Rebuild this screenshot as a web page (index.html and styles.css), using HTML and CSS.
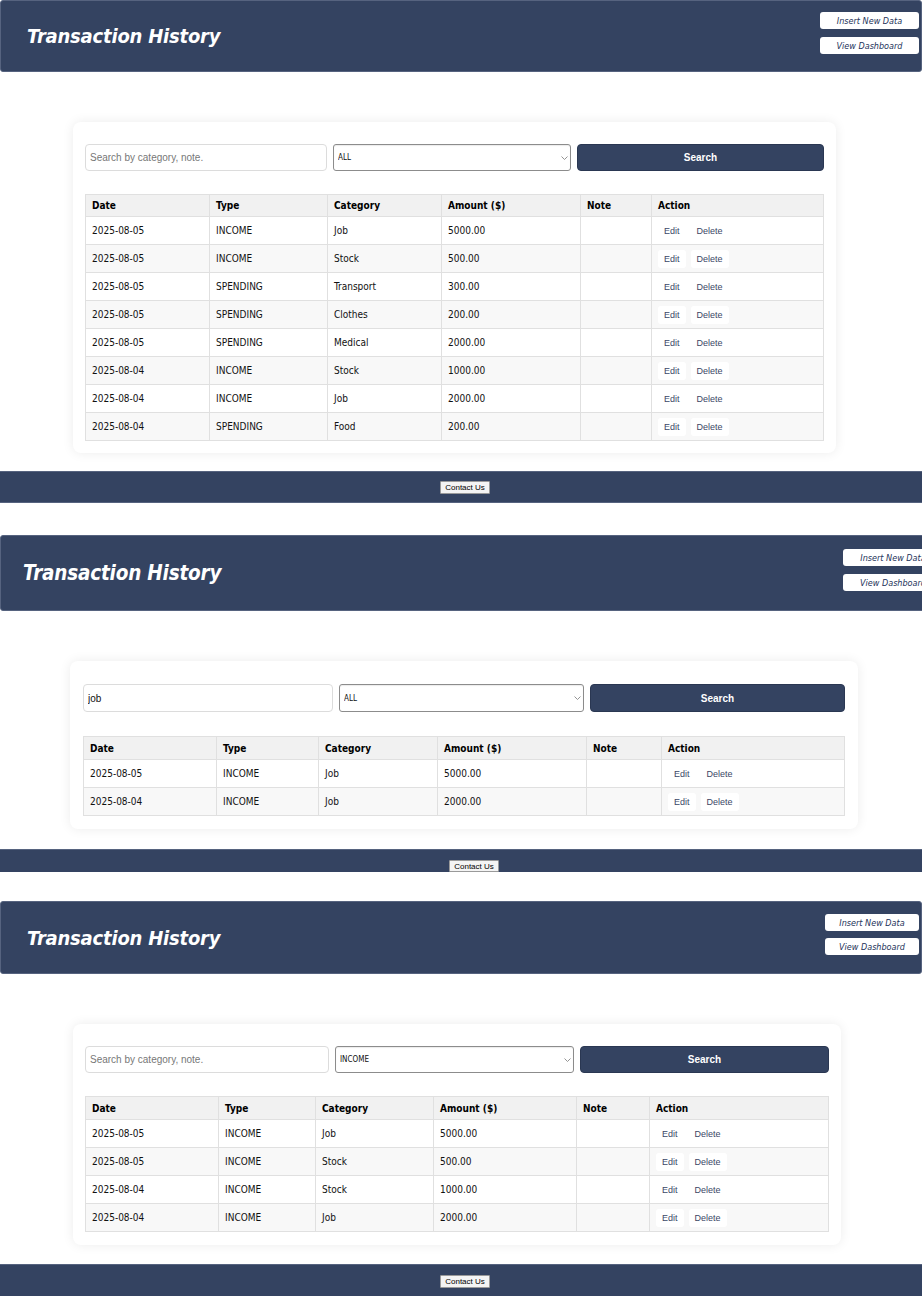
FILE: index.html
```html
<!DOCTYPE html>
<html lang="en">
<head>
    <meta charset="UTF-8">
    <meta name="viewport" content="width=device-width, initial-scale=1.0">
    <title>Transaction History</title>
    <link rel="stylesheet" href="styles.css">
</head>
<body>
    <!-- State 1: all transactions -->
    <section class="shot shot-1">
        <header class="topbar">
            <h1>Transaction History</h1>
            <div class="topbar-links">
                <button type="button">Insert New Data</button>
                <button type="button">View Dashboard</button>
            </div>
        </header>
        <main class="card">
            <form class="search-row">
                <input type="text" placeholder="Search by category, note.">
                <div class="select-wrap">
                    <select><option>ALL</option><option>INCOME</option><option>SPENDING</option></select>
                    <svg class="chevron" width="7" height="4" viewBox="0 0 7 4"><polyline points="0.5,0.5 3.5,3.5 6.5,0.5" fill="none" stroke="#888" stroke-width="0.9"/></svg>
                </div>
                <button type="button" class="search-btn">Search</button>
            </form>
            <table class="tx-table">
                <colgroup>
                    <col class="col-date"><col class="col-type"><col class="col-cat"><col class="col-amount"><col class="col-note"><col>
                </colgroup>
                <thead>
                    <tr><th>Date</th><th>Type</th><th>Category</th><th>Amount ($)</th><th>Note</th><th>Action</th></tr>
                </thead>
                <tbody>
                    <tr><td>2025-08-05</td><td>INCOME</td><td>Job</td><td>5000.00</td><td></td><td><button class="row-btn">Edit</button><button class="row-btn">Delete</button></td></tr>
                    <tr><td>2025-08-05</td><td>INCOME</td><td>Stock</td><td>500.00</td><td></td><td><button class="row-btn">Edit</button><button class="row-btn">Delete</button></td></tr>
                    <tr><td>2025-08-05</td><td>SPENDING</td><td>Transport</td><td>300.00</td><td></td><td><button class="row-btn">Edit</button><button class="row-btn">Delete</button></td></tr>
                    <tr><td>2025-08-05</td><td>SPENDING</td><td>Clothes</td><td>200.00</td><td></td><td><button class="row-btn">Edit</button><button class="row-btn">Delete</button></td></tr>
                    <tr><td>2025-08-05</td><td>SPENDING</td><td>Medical</td><td>2000.00</td><td></td><td><button class="row-btn">Edit</button><button class="row-btn">Delete</button></td></tr>
                    <tr><td>2025-08-04</td><td>INCOME</td><td>Stock</td><td>1000.00</td><td></td><td><button class="row-btn">Edit</button><button class="row-btn">Delete</button></td></tr>
                    <tr><td>2025-08-04</td><td>INCOME</td><td>Job</td><td>2000.00</td><td></td><td><button class="row-btn">Edit</button><button class="row-btn">Delete</button></td></tr>
                    <tr><td>2025-08-04</td><td>SPENDING</td><td>Food</td><td>200.00</td><td></td><td><button class="row-btn">Edit</button><button class="row-btn">Delete</button></td></tr>
                </tbody>
            </table>
        </main>
        <footer class="footbar"><button type="button">Contact Us</button></footer>
    </section>

    <!-- State 2: searched for "job" -->
    <section class="shot shot-2">
        <header class="topbar">
            <h1>Transaction History</h1>
            <div class="topbar-links">
                <button type="button">Insert New Data</button>
                <button type="button">View Dashboard</button>
            </div>
        </header>
        <main class="card">
            <form class="search-row">
                <input type="text" value="job" placeholder="Search by category, note.">
                <div class="select-wrap">
                    <select><option>ALL</option><option>INCOME</option><option>SPENDING</option></select>
                    <svg class="chevron" width="7" height="4" viewBox="0 0 7 4"><polyline points="0.5,0.5 3.5,3.5 6.5,0.5" fill="none" stroke="#888" stroke-width="0.9"/></svg>
                </div>
                <button type="button" class="search-btn">Search</button>
            </form>
            <table class="tx-table">
                <colgroup>
                    <col class="col-date"><col class="col-type"><col class="col-cat"><col class="col-amount"><col class="col-note"><col>
                </colgroup>
                <thead>
                    <tr><th>Date</th><th>Type</th><th>Category</th><th>Amount ($)</th><th>Note</th><th>Action</th></tr>
                </thead>
                <tbody>
                    <tr><td>2025-08-05</td><td>INCOME</td><td>Job</td><td>5000.00</td><td></td><td><button class="row-btn">Edit</button><button class="row-btn">Delete</button></td></tr>
                    <tr><td>2025-08-04</td><td>INCOME</td><td>Job</td><td>2000.00</td><td></td><td><button class="row-btn">Edit</button><button class="row-btn">Delete</button></td></tr>
                </tbody>
            </table>
        </main>
        <footer class="footbar"><button type="button">Contact Us</button></footer>
    </section>

    <!-- State 3: filtered by INCOME -->
    <section class="shot shot-3">
        <header class="topbar">
            <h1>Transaction History</h1>
            <div class="topbar-links">
                <button type="button">Insert New Data</button>
                <button type="button">View Dashboard</button>
            </div>
        </header>
        <main class="card">
            <form class="search-row">
                <input type="text" placeholder="Search by category, note.">
                <div class="select-wrap">
                    <select><option>INCOME</option><option>ALL</option><option>SPENDING</option></select>
                    <svg class="chevron" width="7" height="4" viewBox="0 0 7 4"><polyline points="0.5,0.5 3.5,3.5 6.5,0.5" fill="none" stroke="#888" stroke-width="0.9"/></svg>
                </div>
                <button type="button" class="search-btn">Search</button>
            </form>
            <table class="tx-table">
                <colgroup>
                    <col class="col-date"><col class="col-type"><col class="col-cat"><col class="col-amount"><col class="col-note"><col>
                </colgroup>
                <thead>
                    <tr><th>Date</th><th>Type</th><th>Category</th><th>Amount ($)</th><th>Note</th><th>Action</th></tr>
                </thead>
                <tbody>
                    <tr><td>2025-08-05</td><td>INCOME</td><td>Job</td><td>5000.00</td><td></td><td><button class="row-btn">Edit</button><button class="row-btn">Delete</button></td></tr>
                    <tr><td>2025-08-05</td><td>INCOME</td><td>Stock</td><td>500.00</td><td></td><td><button class="row-btn">Edit</button><button class="row-btn">Delete</button></td></tr>
                    <tr><td>2025-08-04</td><td>INCOME</td><td>Stock</td><td>1000.00</td><td></td><td><button class="row-btn">Edit</button><button class="row-btn">Delete</button></td></tr>
                    <tr><td>2025-08-04</td><td>INCOME</td><td>Job</td><td>2000.00</td><td></td><td><button class="row-btn">Edit</button><button class="row-btn">Delete</button></td></tr>
                </tbody>
            </table>
        </main>
        <footer class="footbar"><button type="button">Contact Us</button></footer>
    </section>
</body>
</html>
```

FILE: styles.css
```css
body {
    margin: 0;
    padding: 0;
    background-color: #fff;
    font-family: "DejaVu Sans Condensed", "DejaVu Sans", sans-serif;
    font-stretch: condensed;
    color: #111;
    overflow-x: hidden;
}

.shot {
    overflow: hidden;
}

/* ---------- top bar ---------- */

.topbar {
    box-sizing: border-box;
    height: 72px;
    display: flex;
    justify-content: space-between;
    align-items: center;
    background-color: #344361;
    border: 1px solid #56637f;
    border-radius: 3px;
    padding: 0 2px 0 26px;
}

.topbar h1 {
    margin: 0;
    color: #fff;
    font-size: 20px;
    font-weight: bold;
    font-style: italic;
    letter-spacing: -0.2px;
}

.topbar-links {
    align-self: flex-start;
    display: flex;
    flex-direction: column;
    gap: 8px;
    padding-top: 11px;
}

.topbar-links button {
    width: 99px;
    height: 17px;
    padding: 0;
    background-color: #fff;
    border: none;
    border-radius: 3px;
    color: #24335a;
    font-family: "DejaVu Sans Condensed", "DejaVu Sans", sans-serif;
    font-stretch: condensed;
    font-style: italic;
    font-size: 9px;
}

/* ---------- card ---------- */

.card {
    display: block;
    box-sizing: border-box;
    width: 763px;
    margin: 50px 0 18px 73px;
    padding: 22px 12px 12px;
    background-color: #fff;
    border-radius: 8px;
    box-shadow: 0 0 12px rgba(0, 0, 0, 0.08);
}

.search-row {
    display: flex;
    gap: 6px;
    height: 27px;
    margin: 0 0 23px;
}

.search-row input {
    flex: none;
    width: 242px;
    box-sizing: border-box;
    height: 100%;
    padding: 0 4px;
    border: 1px solid #dcdcdc;
    border-radius: 4px;
    font-family: "Liberation Sans", Arial, sans-serif;
    font-size: 10px;
    color: #111;
}

.search-row input::placeholder {
    color: #777;
}

.select-wrap {
    flex: none;
    width: 238px;
    position: relative;
}

.select-wrap select {
    appearance: none;
    box-sizing: border-box;
    width: 100%;
    height: 100%;
    padding: 0 4px;
    background-color: #fff;
    border: 1px solid #8c8c8c;
    border-radius: 3px;
    box-shadow: inset 0 1px 1px rgba(0, 0, 0, 0.08);
    font-family: "DejaVu Sans Condensed", "DejaVu Sans", sans-serif;
    font-stretch: condensed;
    font-size: 8px;
    color: #111;
}

.chevron {
    position: absolute;
    right: 3px;
    top: 12px;
}

.search-btn {
    flex: none;
    width: 247px;
    height: 100%;
    padding: 0;
    background-color: #344361;
    border: 1px solid #2a3752;
    border-radius: 4px;
    color: #fff;
    font-family: "Liberation Sans", Arial, sans-serif;
    font-weight: bold;
    font-size: 10px;
}

/* ---------- table ---------- */

.tx-table {
    width: 100%;
    border-collapse: collapse;
    table-layout: fixed;
    font-size: 10px;
}

.tx-table th,
.tx-table td {
    border: 1px solid #e0e0e0;
    padding: 0 6px;
    text-align: left;
    white-space: nowrap;
}

.tx-table thead tr {
    height: 22px;
    background-color: #f1f1f1;
}

.tx-table th {
    font-weight: bold;
    color: #000;
}

.tx-table tbody tr {
    height: 28px;
}

.tx-table tbody tr:nth-child(even) {
    background-color: #f8f8f8;
}

.row-btn {
    height: 18px;
    margin-right: 5px;
    padding: 0 6px;
    background-color: #fff;
    border: none;
    border-radius: 3px;
    color: #3b4766;
    font-family: "Liberation Sans", Arial, sans-serif;
    font-size: 9px;
}

.shot-1 .col-date { width: 124px; }
.shot-1 .col-type { width: 118px; }
.shot-1 .col-cat { width: 114px; }
.shot-1 .col-amount { width: 139px; }
.shot-1 .col-note { width: 71px; }

/* ---------- footer ---------- */

.footbar {
    box-sizing: border-box;
    height: 32px;
    display: flex;
    justify-content: center;
    align-items: center;
    background-color: #344361;
    border-top: 1px solid #56637f;
    border-bottom: 1px solid #56637f;
}

.footbar button {
    height: 13px;
    padding: 0 4px;
    background-color: #f4f4f4;
    border: 1px solid #9a9a9a;
    border-radius: 1px;
    font-family: "Liberation Sans", Arial, sans-serif;
    font-size: 8px;
    color: #000;
    margin-left: 8px;
}

/* ---------- second state ---------- */

.shot-2 {
    margin-top: 32px;
}

.shot-2 .topbar {
    height: 76px;
    padding: 0 0 0 22px;
    margin-right: -22px;
}

.shot-2 .topbar h1 {
    font-size: 20.5px;
}

.shot-2 .topbar-links {
    padding-top: 13px;
}

.shot-2 .topbar-links button {
    width: 100px;
}

.shot-2 .card {
    width: 788px;
    margin: 50px 0 20px 70px;
    padding: 23px 13px 13px;
}

.shot-2 .search-row {
    height: 28px;
    margin-bottom: 24px;
}

.shot-2 .search-row input { width: 250px; }
.shot-2 .select-wrap { width: 245px; }
.shot-2 .search-btn { width: 255px; }

.shot-2 .tx-table thead tr { height: 23px; }

.shot-2 .col-date { width: 133px; }
.shot-2 .col-type { width: 102px; }
.shot-2 .col-cat { width: 119px; }
.shot-2 .col-amount { width: 149px; }
.shot-2 .col-note { width: 75px; }

.shot-2 .footbar {
    height: 23px;
    align-items: flex-end;
    border-bottom: none;
}

.shot-2 .footbar button {
    height: 12px;
    margin-left: 26px;
}

/* ---------- third state ---------- */

.shot-3 {
    margin-top: 29px;
}

.shot-3 .topbar {
    height: 73px;
    padding-right: 2px;
}

.shot-3 .topbar-links {
    padding-top: 12px;
    gap: 7px;
}

.shot-3 .topbar-links button {
    width: 94px;
}

.shot-3 .card {
    width: 768px;
    margin: 50px 0 19px 73px;
    padding-bottom: 13px;
}

.shot-3 .search-row input { width: 244px; }
.shot-3 .select-wrap { width: 239px; }
.shot-3 .search-btn { width: 249px; }

.shot-3 .tx-table thead tr { height: 23px; }

.shot-3 .col-date { width: 133px; }
.shot-3 .col-type { width: 97px; }
.shot-3 .col-cat { width: 118px; }
.shot-3 .col-amount { width: 143px; }
.shot-3 .col-note { width: 73px; }

.shot-3 .footbar {
    height: 34px;
    align-items: flex-start;
    padding-top: 10px;
    border-bottom: none;
}

.shot-3 .footbar button {
    margin-left: 8px;
}
```
